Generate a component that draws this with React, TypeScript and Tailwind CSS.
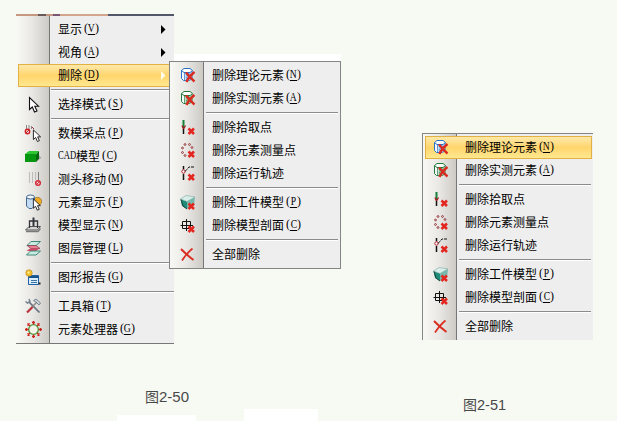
import React from 'react';

type Item = { label: string; hotkey?: string; icon?: React.ReactNode; arrow?: boolean; active?: boolean } | 'sep';

const RedX = ({ big = false }: { big?: boolean }) =>
  big ? (
    <path d="M6 5.500C8 8 11 11.500 14.500 14.500M14.500 5C11.500 7.500 8 11 6.500 15" stroke="#d92b20" strokeWidth="2.400" fill="none" />
  ) : (
    <path d="M8.500 9.500L14 15M14 9.500L8.500 15" stroke="#e32620" strokeWidth="2.500" fill="none" />
  );

const Svg = ({ children, crisp = false }: { children: React.ReactNode; crisp?: boolean }) => (
  <svg className="block h-[17px] w-[17px] overflow-visible" viewBox="0 0 17 17" fill="none" shapeRendering={crisp ? 'crispEdges' : 'auto'}>
    {children}
  </svg>
);

const Cylinder = ({ color, fill }: { color: string; fill: string }) => (
  <Svg>
    <path d="M1.500 3.500V11.500L3.500 13.500H9L12 12V3.500" fill="#f4f8fc" stroke={color} />
    <path d="M5.500 6H12V12L9 13.500H5.500z" fill={fill} />
    <path d="M6 7l5 6M6 10l3 4M8 6l4 5" stroke={color} strokeWidth=".6" />
    <path d="M4 1.500H10L12.500 3.500L10 5.500H4L1.500 3.500z" fill="#fff" stroke={color} />
    <path d="M4.500 6V13" stroke={color} strokeWidth=".7" />
    <RedX big />
  </Svg>
);

const Pick = () => (
  <Svg>
    <path d="M3.500 1V9" stroke="#15803a" strokeWidth="2" />
    <path d="M2 6.500L3.500 10L5.500 6.500" stroke="#a51b22" strokeWidth="1.300" />
    <path d="M3.500 10V15" stroke="#111" strokeWidth="1.500" />
    <RedX />
  </Svg>
);

const dots = [[5, 2.5], [9.5, 2.5], [2.5, 6], [2.5, 10.5], [5, 13.5], [12, 5.5]];
const Points = () => (
  <Svg>
    {dots.map(([x, y]) => (
      <circle key={`${x}-${y}`} cx={x} cy={y} r="0.9" fill="#fff" stroke="#8a2227" strokeWidth=".9" />
    ))}
    <RedX />
  </Svg>
);

const Track = () => (
  <Svg>
    <path d="M3.500 1V4.500M3.500 9V15" stroke="#111" strokeWidth="1.500" />
    <circle cx="3.500" cy="6.500" r="1.700" fill="#fff" stroke="#b51e2c" />
    <path d="M5 6.500L9 2H14" stroke="#111" strokeDasharray="3 1" />
    <RedX />
  </Svg>
);

const Cube = () => (
  <Svg>
    <path d="M0.500 5L7 7.500V15L2 12z" fill="#1e8c78" />
    <path d="M0.500 5L6 1.500L15 3L7 7.500z" fill="#d9eee9" stroke="#7fa7a0" strokeWidth=".6" />
    <path d="M7 7.500L15 3L14 11.500L7 15z" fill="#75b9ac" />
    <path d="M1 5.500L3 12L7 15" stroke="#17483f" />
    <RedX />
  </Svg>
);

const Section = () => (
  <Svg>
    <path d="M2.500 4.500H10.500V11.500H2.500zM6.500 2V14M0.500 8.500H13" stroke="#111" />
    <RedX />
  </Svg>
);

const Cross = () => (
  <Svg>
    <path d="M1 3C4 6 8 10 13.500 14" stroke="#d92e22" strokeWidth="2" />
    <path d="M12.500 2.500C8 6 5 10 2 14.500" stroke="#d92e22" strokeWidth="1.700" />
  </Svg>
);

const Arrow = ({ x, y, s }: { x: number; y: number; s: number }) => (
  <path
    transform={`translate(${x} ${y}) scale(${s})`}
    d="M0.500 0.500V12.500L3.300 10L5.500 15L8 14L5.800 9.200H9.500z"
    fill="#fff"
    stroke="#111"
    strokeWidth="1.100"
  />
);

const Select = () => (
  <Svg>
    <Arrow x={4} y={1} s={1} />
  </Svg>
);

const Sample = () => (
  <Svg>
    <path d="M1.500 0V6M4 0V5M6.500 1V4" stroke="#888" />
    <circle cx="2.500" cy="6.500" r="2.200" fill="#f6dada" stroke="#d51f26" strokeWidth="1.400" />
    <path d="M1 8L4 5M7 2l2 2" stroke="#a03038" />
    <Arrow x={8} y={4.5} s={0.8} />
  </Svg>
);

const GreenBlock = () => (
  <Svg>
    <path d="M11 14L16.500 10L14 7z" fill="#a8aaa8" />
    <path d="M0 6L4 3H14L11 6.500z" fill="#2fc634" />
    <path d="M0 6H11V14H0z" fill="#07960f" />
    <path d="M11 6.500L14 3V10.500L11 14z" fill="#056709" />
  </Svg>
);

const Probe = () => (
  <Svg>
    <path d="M4.500 1V12M7.500 1V12M10.500 1V9" stroke="#c0bbbb" />
    <path d="M13.500 1V9" stroke="#7c7c7c" />
    <circle cx="13" cy="12" r="2.300" fill="#f3dada" stroke="#d52835" strokeWidth="1.500" />
    <path d="M11.500 13.500L14.500 10.500" stroke="#d52835" />
  </Svg>
);

const Element = () => (
  <Svg>
    <circle cx="12.500" cy="7.500" r="4.200" fill="#f0aa22" stroke="#8c7341" strokeWidth=".7" />
    <path d="M1.500 3V12L4 14.500H7L9.500 12V3" fill="#c3dcf4" stroke="#45678e" />
    <ellipse cx="5.500" cy="3" rx="4" ry="2" fill="#f1f7fd" stroke="#45678e" />
    <Arrow x={8} y={4.5} s={0.78} />
  </Svg>
);

const Machine = () => (
  <Svg>
    <path d="M0.500 13L4 9.500H15.500L12.500 13z" fill="#d5d5d5" stroke="#555" />
    <path d="M4.500 11V4H12.500V11" stroke="#30343a" strokeWidth="1.300" />
    <path d="M8.500 0.500V9" stroke="#30343a" strokeWidth="2" />
    <path d="M1 14.500H13L15.500 11.500" stroke="#777" strokeWidth="1.300" />
  </Svg>
);

const Layers = () => (
  <Svg>
    <path d="M6 1.500H15.500L11 5.500H2z" fill="#c6eee0" stroke="#408778" />
    <path d="M2 5.500L6 8.500H15L11 5.500z" fill="#e98292" stroke="#884555" strokeWidth=".8" />
    <path d="M5 8.500H14.500L11 11H1.500z" fill="#d24763" />
    <path d="M5.500 11H15.500L11 15H1.500z" fill="#c6eee0" stroke="#408778" />
  </Svg>
);

const Report = () => (
  <Svg>
    <path d="M3.500 6.500H13.500V15.500H3.500z" fill="#d8edff" stroke="#2261a3" />
    <path d="M4 7H14V9H4z" fill="#19538d" />
    <path d="M6 11.500H12M6 13.500H12" stroke="#3f719e" />
    <path d="M13.500 14.500H15.500" stroke="#222" strokeWidth="2" />
    <circle cx="4" cy="4" r="3.200" fill="#f6c32f" stroke="#b98b22" strokeWidth=".7" />
    <circle cx="3.500" cy="3.500" r="1" fill="#fff2a6" />
  </Svg>
);

const Tools = () => (
  <Svg>
    <path d="M4 4L14.500 14.500" stroke="#66707e" strokeWidth="1.700" />
    <path d="M0.500 3.500L2.500 5L5 3.500L4 1" stroke="#75808e" strokeWidth="1.500" />
    <path d="M12 4L7 9" stroke="#888" strokeWidth="1.500" />
    <path d="M7.500 9L2 14.500" stroke="#ba3138" strokeWidth="2.100" />
    <path d="M8.500 2.500L11 1L15.500 5L14 7L11 4z" fill="#ced4dc" stroke="#65717d" strokeWidth=".8" />
  </Svg>
);

const angles = [0, 45, 90, 135, 180, 225, 270, 315];
const Processor = () => (
  <Svg>
    <circle cx="8.500" cy="8.500" r="4.800" fill="#f2f3e9" stroke="#469c36" strokeWidth="1.300" />
    {angles.map((a) => (
      <path key={a} transform={`rotate(${a} 8.500 8.500)`} d="M8.500 0V3.500M7 1.500H10" stroke="#cb231c" strokeWidth="1.300" />
    ))}
  </Svg>
);

const deleteItems = (active: boolean): Item[] => [
  { label: '删除理论元素', hotkey: 'N', icon: <Cylinder color="#2871c6" fill="#a2caef" />, active },
  { label: '删除实测元素', hotkey: 'A', icon: <Cylinder color="#217a38" fill="#98c6a2" /> },
  'sep',
  { label: '删除拾取点', icon: <Pick /> },
  { label: '删除元素测量点', icon: <Points /> },
  { label: '删除运行轨迹', icon: <Track /> },
  'sep',
  { label: '删除工件模型', hotkey: 'P', icon: <Cube /> },
  { label: '删除模型剖面', hotkey: 'C', icon: <Section /> },
  'sep',
  { label: '全部删除', icon: <Cross /> },
];

const mainItems: Item[] = [
  { label: '显示', hotkey: 'V', arrow: true },
  { label: '视角', hotkey: 'A', arrow: true },
  { label: '删除', hotkey: 'D', arrow: true, active: true },
  'sep',
  { label: '选择模式', hotkey: 'S', icon: <Select /> },
  'sep',
  { label: '数模采点', hotkey: 'P', icon: <Sample /> },
  { label: 'CAD模型', hotkey: 'C', icon: <GreenBlock /> },
  { label: '测头移动', hotkey: 'M', icon: <Probe /> },
  { label: '元素显示', hotkey: 'F', icon: <Element /> },
  { label: '模型显示', hotkey: 'N', icon: <Machine /> },
  { label: '图层管理', hotkey: 'L', icon: <Layers /> },
  'sep',
  { label: '图形报告', hotkey: 'G', icon: <Report /> },
  'sep',
  { label: '工具箱', hotkey: 'T', icon: <Tools /> },
  { label: '元素处理器', hotkey: 'G', icon: <Processor /> },
];

const serif = "font-['Liberation_Serif',serif] text-[12px] leading-[13px]";

function Label({ label, hotkey }: { label: string; hotkey?: string }) {
  const cad = label.startsWith('CAD');
  return (
    <span className="mb-[2px] flex h-[15px] items-center whitespace-nowrap text-[12px] leading-[15px] text-black">
      {cad && (
        <span className={`w-[18px] ${serif}`}>
          <span className="inline-block origin-left scale-x-[0.72]">CAD</span>
        </span>
      )}
      <span>{cad ? label.slice(3) : label}</span>
      {hotkey && (
        <span className={`ml-[2px] flex h-[13px] ${serif}`}>
          <span>(</span>
          <span className="flex w-[7px] justify-center border-b border-black">
            <span className="inline-block scale-x-[0.8]">{hotkey}</span>
          </span>
          <span>)</span>
        </span>
      )}
    </span>
  );
}

function Rows({ items, main = false }: { items: Item[]; main?: boolean }) {
  return (
    <>
      {items.map((it, i) =>
        it === 'sep' ? (
          <div key={i} className={`flex h-[6px] pt-[2px] ${main ? 'pl-[35px]' : 'pl-[36px] pr-[2px]'}`}>
            <div className="h-[2px] flex-1 border-b border-white bg-[#8b8b8b]" />
          </div>
        ) : (
          <div
            key={i}
            className={`flex h-[23px] items-center ${main ? 'ml-[2px]' : 'ml-[2px] mr-px'} border ${
              it.active ? 'border-[#e3b044] bg-linear-to-b from-[#ffe9a8] via-[#ffd56c] to-[#ffe88f]' : 'border-transparent'
            }`}
          >
            <div className={`flex shrink-0 ${main ? 'w-[39px] pl-[6px]' : 'w-[39px] pl-[7px]'}`}>{it.icon}</div>
            <Label label={it.label} hotkey={it.hotkey} />
            {it.arrow && (
              <svg className="mb-px ml-auto mr-[7px] h-[9px] w-[5px]" viewBox="0 0 5 9">
                <path d="M0 0L4.500 4.500L0 9z" fill={it.active ? '#fffbe8' : '#000'} />
              </svg>
            )}
          </div>
        ),
      )}
    </>
  );
}

const panel =
  'bg-[linear-gradient(to_right,#f8f8f5_0,#e9e8e5_16px,#cdcac5_33px,#777_33px,#777_34px,#eeeeee_34px)]';

function Caption({ n }: { n: string }) {
  return (
    <>
      <span className="inline-block w-[14px] text-[14px]">图</span>
      {n}
    </>
  );
}

export default function App() {
  return (
    <div className="relative h-[421px] w-[617px] overflow-hidden bg-[#f7faf3] font-['Noto_Sans_CJK_SC',sans-serif]">
      <div className="flex">
        <div className={`ml-4 mt-[14px] flex h-[330px] w-[158px] flex-col border-b border-[#777] ${panel}`}>
          <div className="mb-[2px] flex h-[2px]">
            <div className="w-[22px] bg-[#c69882]" />
            <div className="w-[8px] bg-[#655b58]" />
            <div className="w-[7px] bg-[#c69882]" />
            <div className="w-[7px] bg-[#795574]" />
            <div className="w-[48px] bg-[#d2a58c]" />
            <div className="flex-1 bg-[#52576a]" />
          </div>
          <Rows items={mainItems} main />
        </div>
        <div className={`ml-[248px] mt-[133px] h-[207px] w-[171px] border-l border-t border-[#858585] pt-[2px] ${panel}`}>
          <Rows items={deleteItems(true)} />
        </div>
      </div>

      <div className="absolute left-[174px] top-[54px] h-[7px] w-[167px] bg-white" />
      <div className={`absolute left-[169px] top-[61px] h-[208px] w-[172px] border border-[#858585] pt-[2px] ${panel}`}>
        <Rows items={deleteItems(false)} />
      </div>

      <div className="flex items-start font-['Liberation_Sans','Noto_Sans_CJK_SC',sans-serif] text-[15px] leading-[18px] text-[#484848]">
        <div className="ml-[145px] mt-[44px] w-[318px] whitespace-nowrap">
          <Caption n="2-50" />
        </div>
        <div className="mt-[52px] whitespace-nowrap text-[14.500px]">
          <Caption n="2-51" />
        </div>
      </div>
      <div className="absolute bottom-0 left-[117px] h-[6px] w-[79px] bg-white" />
      <div className="absolute bottom-0 left-[244px] h-[12px] w-[74px] bg-white" />
    </div>
  );
}
